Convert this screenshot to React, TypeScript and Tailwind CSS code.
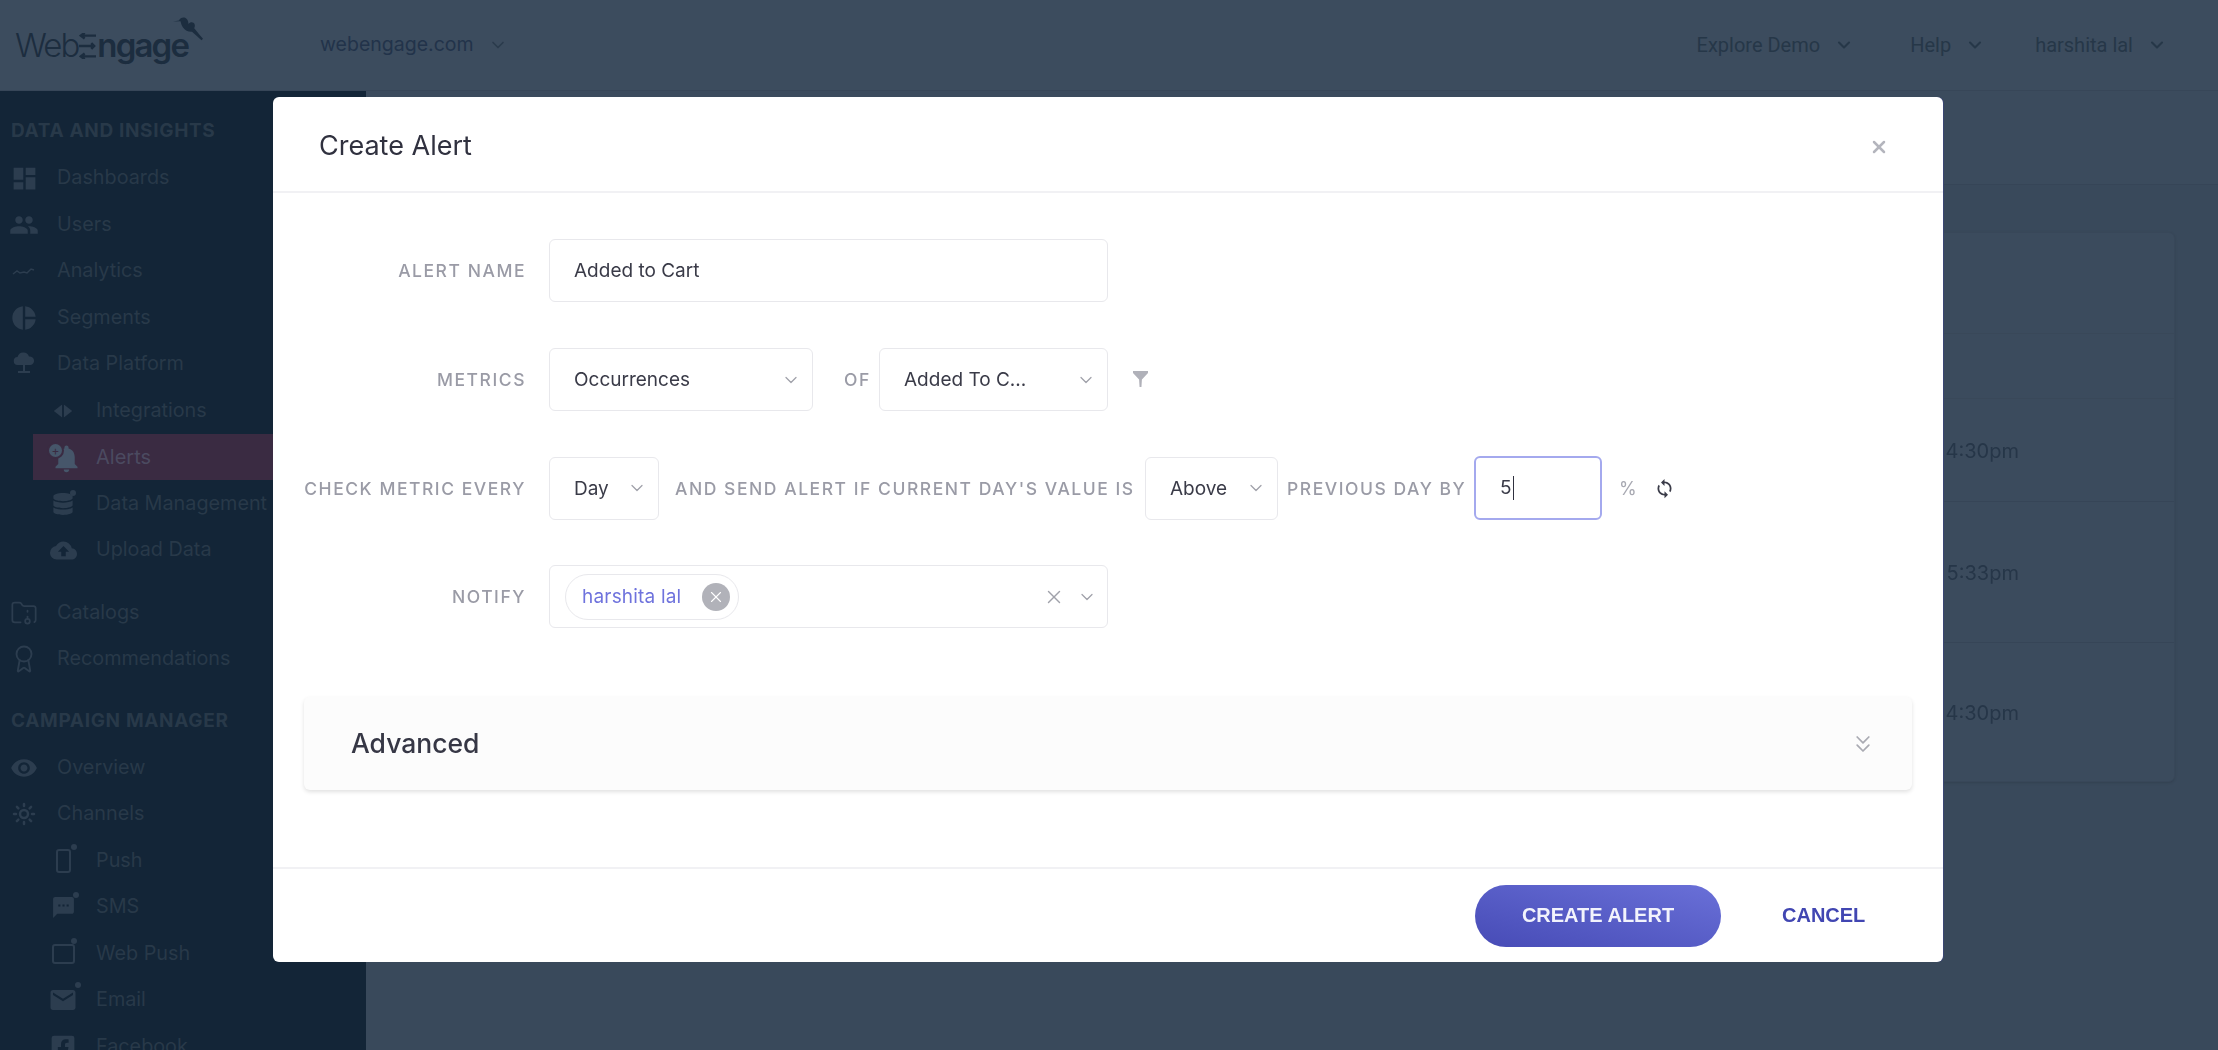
import React from "react";
import { MdDashboard, MdPeople, MdPieChart, MdCloudUpload, MdVisibility, MdSms, MdEmail, MdNotifications, MdSync } from "react-icons/md";
import { FaDatabase, FaFacebookSquare } from "react-icons/fa";
import { LuAward, LuFolderArchive, LuSun, LuChevronDown, LuChevronsDown, LuX } from "react-icons/lu";

const Dot = () => <span className="absolute -right-[3px] -top-[3px] h-[6px] w-[6px] rounded-full bg-[#2c3d4f]" />;

const Analytics = () => (
  <svg viewBox="0 0 24 24" className="h-[24px] w-[24px]" fill="none" stroke="currentColor" strokeWidth="1.5"><path d="M1 15l4-3 3 2 4-1 3 1 4-4 3 1" /></svg>
);
const Platform = () => (
  <svg viewBox="0 0 24 24" className="h-[24px] w-[24px]" fill="currentColor"><path d="M6 13a4 4 0 0 1-.5-8A6 6 0 0 1 17 4.500a4.300 4.300 0 0 1 1.500 8.500z" /><path d="M11 13h2v6h5v2H6v-2h5z" /></svg>
);
const Integrations = () => (
  <svg viewBox="0 0 24 24" className="h-[22px] w-[22px]" fill="currentColor"><path d="M11 5v14L2 12zM13 5l9 7-9 7z" /></svg>
);
const Phone = () => (
  <span className="relative block h-[24px] w-[15px] rounded-[3px] border-2 border-current"><span className="absolute -right-[8px] -top-[7px] h-[6px] w-[6px] rounded-full bg-[#2c3d4f]" /></span>
);
const WebBox = () => (
  <span className="relative block h-[20px] w-[23px] rounded-[3px] border-2 border-current"><span className="absolute -right-[4px] -top-[8px] h-[6px] w-[6px] rounded-full bg-[#2c3d4f]" /></span>
);
const BellPlus = () => (
  <span className="relative block h-[34px] w-[32px]">
    <MdNotifications className="absolute left-[2px] top-[2px] h-[33px] w-[33px]" />
    <span className="absolute -left-[1px] top-[2px] flex h-[17px] w-[17px] items-center justify-center rounded-full border-2 border-[#3a2b42] bg-[#46566a] text-[12px] leading-none text-[#3a2b42]">+</span>
  </span>
);

function NavRow({ icon, label, sub, active }: { icon: React.ReactNode; label: string; sub?: boolean; active?: boolean }) {
  return (
    <div className={sub ? "flex h-[46.500px] items-center pl-[33px]" : "flex h-[46.500px] items-center pl-[9px]"}>
      <div className={active ? "flex h-[46px] flex-1 items-center bg-[#3a2b42] pl-[15px] text-[#46566a]" : sub ? "flex h-full flex-1 items-center pl-[15px] text-[#2c3d4f]" : "flex h-full flex-1 items-center text-[#2c3d4f]"}>
        <span className="flex w-[30px] shrink-0 items-center justify-center text-[24px]">{icon}</span>
        <span className={active ? "ml-[18px] text-[20px] whitespace-nowrap text-[#4b4a60]" : "ml-[18px] text-[19.800px] whitespace-nowrap text-[#283949]"}>{label}</span>
      </div>
    </div>
  );
}

function Heading({ children, className }: { children: React.ReactNode; className: string }) {
  return <div className={`flex h-[47px] items-center pl-[11px] text-[19px] font-bold tracking-[0.035em] whitespace-nowrap text-[#283949] ${className}`}>{children}</div>;
}

function Logo() {
  return (
    <div className="relative ml-[15px] mt-[2px] flex h-[60px] w-[190px] items-center text-[#1c2d3f]">
      <span className="text-[33px] font-light tracking-[-0.06em]">Web</span>
      <svg viewBox="0 0 18 26" className="mx-[1px] h-[26px] w-[17px]" fill="none" stroke="currentColor" strokeWidth="2.600">
        <path d="M18 2H3M6-1L2 2l4 3M0 13h16M13 10l3 3-3 3M18 24H3M6 21l-4 3 4 3" />
      </svg>
      <span className="text-[33px] font-semibold tracking-[-0.055em]">ngage</span>
      <svg viewBox="0 0 30 27" className="absolute left-[158px] top-[1px] h-[27px] w-[30px]" fill="currentColor">
        <path d="M0 4.500l6-1C7 1 10 0 12.500 1c2 1 2.800 3 3 6 1.200-1.800 3.500-2.300 5-1.200 1.700 1.200 1.700 3.500.7 5.500 2.500 3 5 6 8.800 10.500l-1.500 1.500c-3.500-3-6.500-6-9.500-8.500-3.500.3-7-1.300-9-4.300-1.300-2-2-4-2.500-6.200z" />
      </svg>
    </div>
  );
}

function TopLink({ label, className }: { label: string; className?: string }) {
  return (
    <div className={`flex items-center gap-[14px] text-[#263748] ${className ?? ""}`}>
      <span className="font-['Roboto',sans-serif] text-[20px]">{label}</span>
      <LuChevronDown className="h-[20px] w-[20px]" strokeWidth={2.500} />
    </div>
  );
}

const Label = ({ children }: { children: React.ReactNode }) => (
  <div className="w-[222px] shrink-0 pt-[2px] text-right text-[17.500px] font-medium tracking-[0.088em] whitespace-nowrap text-[#9a9ba6]">{children}</div>
);
const Word = ({ children, className }: { children: React.ReactNode; className: string }) => (
  <div className={`shrink-0 pt-[2px] text-[17.500px] font-medium tracking-[0.088em] whitespace-nowrap text-[#9a9ba6] ${className}`}>{children}</div>
);

function Select({ value, className }: { value: string; className: string }) {
  return (
    <div className={`flex h-[63px] shrink-0 items-center justify-between rounded-[6px] border border-[#e8e8ec] pl-[24px] pr-[11px] text-[19px] text-[#3a3b48] ${className}`}>
      <span className="pt-[2px] whitespace-nowrap">{value}</span>
      <LuChevronDown className="h-[20px] w-[20px] text-[#a0a1aa]" strokeWidth={1.500} />
    </div>
  );
}

export default function App() {
  return (
    <div className="relative h-[1050px] w-[2218px] overflow-hidden bg-[#39495b] font-['Inter',sans-serif]">
      <div className="blur-[0.7px]">
        <header className="flex h-[91px] items-center justify-between border-b border-[#374658] bg-[#3c4c5e] pr-[51px]">
          <div className="flex items-center">
            <Logo />
            <div className="ml-[115px] flex items-center gap-[14px] text-[#22334a]">
              <span className="text-[19.500px]">webengage.com</span>
              <LuChevronDown className="h-[20px] w-[20px] text-[#2b3b4c]" strokeWidth={2} />
            </div>
          </div>
          <div className="flex items-center">
            <TopLink label="Explore Demo" />
            <TopLink label="Help" className="ml-[56px]" />
            <TopLink label="harshita lal" className="ml-[50px]" />
          </div>
        </header>

        <div className="flex h-[959px]">
          <aside className="h-full w-[366px] shrink-0 overflow-hidden bg-[#132537]">
            <Heading className="mt-[17px]">DATA AND INSIGHTS</Heading>
            <NavRow icon={<MdDashboard className="h-[29px] w-[29px]" />} label="Dashboards" />
            <NavRow icon={<MdPeople className="h-[34px] w-[34px]" />} label="Users" />
            <NavRow icon={<Analytics />} label="Analytics" />
            <NavRow icon={<MdPieChart className="h-[28px] w-[28px]" />} label="Segments" />
            <NavRow icon={<Platform />} label="Data Platform" />
            <NavRow sub icon={<Integrations />} label="Integrations" />
            <NavRow sub active icon={<BellPlus />} label="Alerts" />
            <NavRow sub icon={<span className="relative"><FaDatabase className="h-[22px] w-[20px]" /><Dot /></span>} label="Data Management" />
            <NavRow sub icon={<MdCloudUpload className="h-[27px] w-[27px]" />} label="Upload Data" />
            <div className="mt-[16px]">
              <NavRow icon={<LuFolderArchive className="h-[28px] w-[28px]" strokeWidth={1.500} />} label="Catalogs" />
              <NavRow icon={<LuAward className="h-[30px] w-[30px]" strokeWidth={1.500} />} label="Recommendations" />
            </div>
            <Heading className="mt-[15px]">CAMPAIGN MANAGER</Heading>
            <NavRow icon={<MdVisibility className="h-[28px] w-[28px]" />} label="Overview" />
            <NavRow icon={<LuSun className="h-[24px] w-[24px]" strokeWidth={2.500} />} label="Channels" />
            <NavRow sub icon={<Phone />} label="Push" />
            <NavRow sub icon={<span className="relative"><MdSms className="h-[25px] w-[25px]" /><Dot /></span>} label="SMS" />
            <NavRow sub icon={<WebBox />} label="Web Push" />
            <NavRow sub icon={<span className="relative"><MdEmail className="h-[30px] w-[30px]" /><Dot /></span>} label="Email" />
            <NavRow sub icon={<FaFacebookSquare className="h-[26px] w-[26px]" />} label="Facebook" />
          </aside>

          <main className="min-w-0 flex-1">
            <div className="h-[94px] border-b border-[#364557] bg-[#3b4b5d]" />
            <div className="mx-[43px] mt-[47px] h-[550px] rounded-[6px] border border-[#384759] bg-[#3b4b5d] shadow-sm">
              <div className="h-[101px] border-b border-[#394859]" />
              <div className="h-[65px] border-b border-[#394859]" />
              <div className="flex h-[103px] items-center justify-end border-b border-[#364557] pr-[155px] pt-[2px] text-[20px] text-[#263648]">4:30pm</div>
              <div className="flex h-[141px] items-center justify-end border-b border-[#364557] pr-[155px] pt-[2px] text-[20px] text-[#263648]">5:33pm</div>
              <div className="flex h-[139px] items-center justify-end pr-[155px] text-[20px] text-[#263648]">4:30pm</div>
            </div>
          </main>
        </div>
      </div>

      <div className="absolute inset-0 flex justify-center pr-[2px] pt-[97px]">
        <div className="flex h-[865px] w-[1670px] flex-col rounded-[6px] bg-white shadow-[1px_0_0_#3a4674] blur-[0.3px]">
          <div className="flex h-[96px] shrink-0 items-center justify-between border-b-2 border-[#f1f1f4] pl-[46px] pr-[54px] pt-[5px]">
            <h1 className="text-[27px] font-normal text-[#30313f]">Create Alert</h1>
            <LuX className="h-[20px] w-[20px] text-[#b4b5bd]" strokeWidth={3} />
          </div>

          <div className="flex-1 px-[31px] pt-[46px]">
            <div className="flex h-[63px] items-center gap-[23px]">
              <Label>ALERT NAME</Label>
              <div className="flex h-[63px] w-[559px] items-center rounded-[6px] border border-[#e8e8ec] pl-[24px] pt-[2px] text-[19px] text-[#3a3b48]">Added to Cart</div>
            </div>

            <div className="mt-[46px] flex h-[63px] items-center">
              <div className="mr-[23px]"><Label>METRICS</Label></div>
              <Select value="Occurrences" className="w-[264px]" />
              <Word className="ml-[31px] mr-[10px] w-[25px]">OF</Word>
              <Select value="Added To C..." className="w-[229px]" />
              <svg viewBox="0 0 16 18" className="ml-[25px] mb-[3px] h-[17px] w-[15px] text-[#b0b1b9]" fill="currentColor"><path d="M0 1h16v2L9.500 10 9 18H7l-.5-8L0 3z" /></svg>
            </div>

            <div className="mt-[45px] flex h-[64px] items-center">
              <div className="mr-[23px]"><Label>CHECK METRIC EVERY</Label></div>
              <Select value="Day" className="w-[110px]" />
              <Word className="ml-[16px] w-[465px]">AND SEND ALERT IF CURRENT DAY'S VALUE IS</Word>
              <Select value="Above" className="ml-[5px] w-[133px]" />
              <Word className="ml-[9px] w-[179px]">PREVIOUS DAY BY</Word>
              <div className="ml-[8px] flex h-[64px] w-[128px] items-center rounded-[6px] border-2 border-[#a4a9ee] pl-[24px] text-[19px] text-[#3a3b48]">
                5<span className="ml-[1px] h-[24px] w-[1.500px] bg-[#30313f]" />
              </div>
              <span className="ml-[17px] text-[18px] text-[#a7a8b1]">%</span>
              <MdSync className="ml-[17px] h-[21px] w-[21px] text-[#3a3b48]" />
            </div>

            <div className="mt-[45px] flex h-[63px] items-center gap-[23px]">
              <Label>NOTIFY</Label>
              <div className="flex h-[63px] w-[559px] items-center rounded-[6px] border border-[#e8e8ec] pl-[15px] pr-[10px]">
                <div className="flex h-[46px] w-[174px] items-center justify-between rounded-full border border-[#e8e8ec] pl-[16px] pr-[8px]">
                  <span className="pt-[2px] text-[19px] tracking-[0.01em] text-[#6f73dd]">harshita lal</span>
                  <span className="flex h-[28px] w-[28px] items-center justify-center rounded-full bg-[#b1b2b9] text-white"><LuX className="h-[18px] w-[18px]" strokeWidth={1.500} /></span>
                </div>
                <LuX className="ml-auto h-[22px] w-[22px] text-[#a0a1aa]" strokeWidth={1.500} />
                <LuChevronDown className="ml-[12px] h-[20px] w-[20px] text-[#a0a1aa]" strokeWidth={1.500} />
              </div>
            </div>

            <div className="mt-[69px] flex h-[93px] items-center justify-between rounded-[6px] bg-[#fcfcfc] pl-[47px] pr-[35px] shadow-[0_2px_4px_rgba(0,0,0,0.12)]">
              <span className="text-[26.500px] font-medium text-[#363745]">Advanced</span>
              <LuChevronsDown className="h-[28px] w-[28px] text-[#a9aab2]" strokeWidth={1.500} />
            </div>
          </div>

          <div className="flex h-[95px] shrink-0 items-start border-t-2 border-[#f1f1f4] pl-[1202px] pt-[16px]">
            <button className="h-[62px] w-[246px] rounded-full bg-gradient-to-tr from-[#474bb6] to-[#6a70d8] pb-[2px] font-['Liberation_Sans',sans-serif] text-[20px] font-bold text-[#f2f3fc]">CREATE ALERT</button>
            <span className="ml-[61px] flex h-[60px] items-center font-['Liberation_Sans',sans-serif] text-[20px] font-bold text-[#4146b2]">CANCEL</span>
          </div>
        </div>
      </div>
    </div>
  );
}
